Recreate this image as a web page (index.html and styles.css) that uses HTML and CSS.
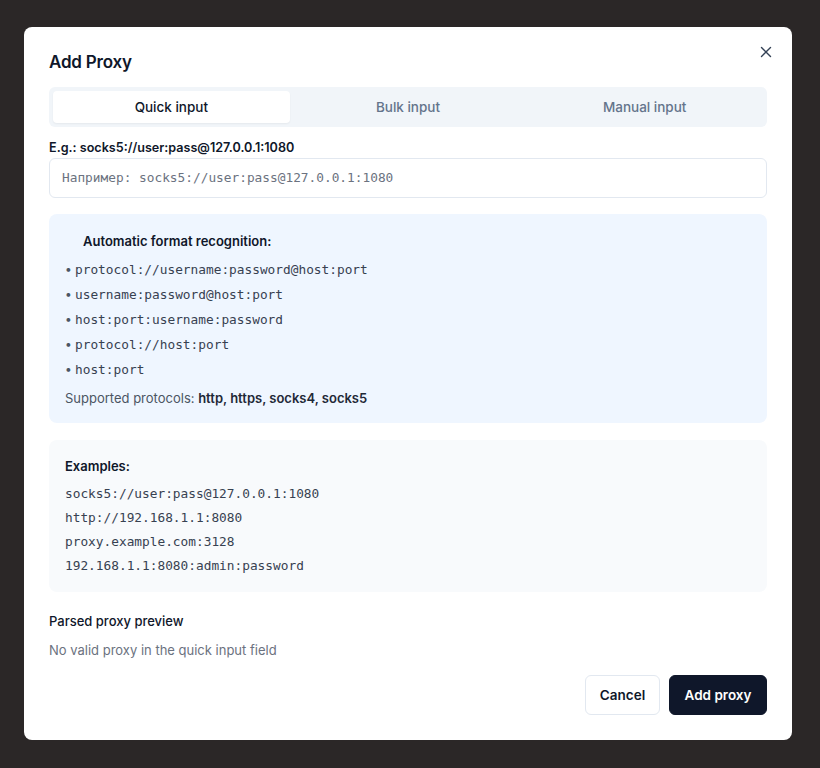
FILE: index.html
```html
<!DOCTYPE html>
<html lang="en">
  <head>
    <meta charset="UTF-8" />
    <meta name="viewport" content="width=device-width, initial-scale=1.0" />
    <title>Add Proxy</title>
    <link rel="stylesheet" href="styles.css">
  </head>
  <body>
    <div class="overlay">
      <div class="modal">
        <div class="modal-head">
          <h2>Add Proxy</h2>
          <button class="close" aria-label="Close">
            <svg width="12" height="12" viewBox="0 0 12 12"><path d="M1.5 1.5l9 9M10.5 1.5l-9 9" stroke="#334155" stroke-width="1.4" stroke-linecap="round"/></svg>
          </button>
        </div>

        <div class="tabs">
          <div class="tab active">Quick input</div>
          <div class="tab">Bulk input</div>
          <div class="tab">Manual input</div>
        </div>

        <label class="field-label" for="quick">E.g.: socks5://user:pass@127.0.0.1:1080</label>
        <input id="quick" class="field" type="text" placeholder="Например: socks5://user:pass@127.0.0.1:1080" />

        <div class="info">
          <div class="info-title">Automatic format recognition:</div>
          <ul class="formats">
            <li>protocol://username:password@host:port</li>
            <li>username:password@host:port</li>
            <li>host:port:username:password</li>
            <li>protocol://host:port</li>
            <li>host:port</li>
          </ul>
          <div class="supported">Supported protocols: <b>http, https, socks4, socks5</b></div>
        </div>

        <div class="examples">
          <div class="examples-title">Examples:</div>
          <div class="mono">socks5://user:pass@127.0.0.1:1080</div>
          <div class="mono">http://192.168.1.1:8080</div>
          <div class="mono">proxy.example.com:3128</div>
          <div class="mono">192.168.1.1:8080:admin:password</div>
        </div>

        <div class="preview">
          <div class="preview-title">Parsed proxy preview</div>
          <div class="preview-empty">No valid proxy in the quick input field</div>
        </div>

        <div class="actions">
          <button class="btn btn-outline">Cancel</button>
          <button class="btn btn-dark">Add proxy</button>
        </div>
      </div>
    </div>
  </body>
</html>
```

FILE: styles.css
```css
* {
  margin: 0px;
  padding: 0px;
  box-sizing: border-box;
}
body {
  width: 820px;
  height: 768px;
  background: #2b2727;
  font-family: Inter, "Noto Sans", sans-serif;
  color: #0f172a;
  overflow: hidden;
}

.overlay {
  padding: 27px 28px 0 24px;
}

.modal {
  width: 768px;
  height: 713px;
  background: #fff;
  border-radius: 8px;
  padding: 22px 25px 25px 25px;
  display: flex;
  flex-direction: column;
}

.modal-head {
  display: flex;
  justify-content: space-between;
  align-items: flex-start;
  height: 38px;
}
.modal-head h2 {
  font-size: 17px;
  font-weight: 600;
  margin-top: 3px;
  letter-spacing: -0.2px;
}
.close {
  border: none;
  background: none;
  margin-top: -3px;
  margin-right: -6px;
  width: 14px;
  height: 14px;
}

.tabs {
  display: flex;
  background: #f1f5f9;
  border-radius: 6px;
  padding: 4px;
  height: 40px;
}
.tab {
  flex: 1;
  display: flex;
  align-items: center;
  justify-content: center;
  font-size: 13.5px;
  font-weight: 500;
  color: #64748b;
  border-radius: 4px;
}
.tab.active {
  background: #fff;
  color: #0f172a;
  box-shadow: 0 1px 2px rgba(0, 0, 0, 0.05);
}

.field-label {
  display: block;
  margin-top: 13px;
  font-size: 12.6px;
  font-weight: 600;
  line-height: 16px;
}
.field {
  margin-top: 2px;
  height: 40px;
  width: 100%;
  border: 1px solid #e2e8f0;
  border-radius: 6px;
  padding: 0 12px 2px 12px;
  font-family: "DejaVu Sans Mono", monospace;
  font-size: 12.8px;
  outline: none;
}
.field::placeholder {
  color: #6b7280;
}

.info {
  margin-top: 16px;
  background: #eff6ff;
  border-radius: 8px;
  padding: 19px 16px 14px 16px;
  height: 209px;
}
.info-title {
  font-size: 13px;
  font-weight: 600;
  padding-left: 18px;
  line-height: 16px;
}
.formats {
  list-style: none;
  margin-top: 8px;
  font-family: "DejaVu Sans Mono", monospace;
  font-size: 12.8px;
  color: #374151;
}
.formats li {
  height: 25px;
  line-height: 25px;
}
.formats li::before {
  content: "\2022";
  font-family: Inter, sans-serif;
  font-size: 12px;
  line-height: 1;
  display: inline-block;
  width: 10px;
  color: #4b5563;
  position: relative;
  top: -1px;
}
.supported {
  margin-top: 6px;
  font-size: 13px;
  color: #4b5563;
  line-height: 20px;
}
.supported b {
  color: #1f2937;
  font-weight: 600;
}

.examples {
  margin-top: 17px;
  background: #f8fafc;
  border-radius: 8px;
  padding: 18px 16px 14px 16px;
  height: 152px;
}
.examples-title {
  font-size: 13px;
  font-weight: 600;
  line-height: 16px;
  margin-bottom: 8px;
}
.mono {
  font-family: "DejaVu Sans Mono", monospace;
  font-size: 12.8px;
  line-height: 24px;
  color: #374151;
}

.preview {
  margin-top: 21px;
}
.preview-title {
  font-size: 13px;
  font-weight: 500;
  line-height: 16px;
}
.preview-empty {
  margin-top: 13px;
  font-size: 13px;
  color: #6b7280;
  line-height: 16px;
}

.actions {
  margin-top: auto;
  display: flex;
  justify-content: flex-end;
  gap: 9px;
}
.btn {
  height: 40px;
  border-radius: 6px;
  font-family: Inter, sans-serif;
  font-size: 13.5px;
  font-weight: 600;
  padding: 0;
  white-space: nowrap;
}
.btn-outline {
  background: #fff;
  border: 1px solid #e2e8f0;
  color: #0f172a;
  width: 75px;
}
.btn-dark {
  background: #0f172a;
  border: 1px solid #0f172a;
  color: #fff;
  width: 98px;
}
```
